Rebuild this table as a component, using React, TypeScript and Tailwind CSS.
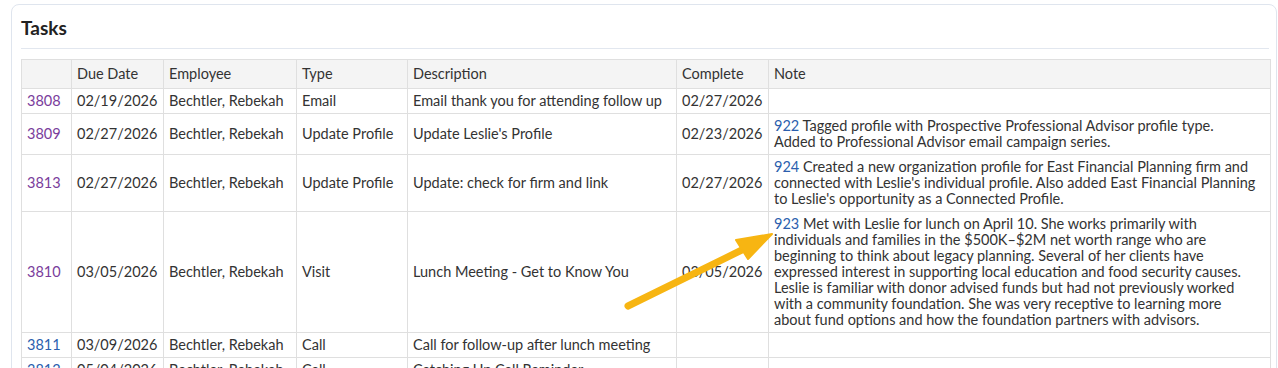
import React from "react";

type Row = {
  id: string;
  visited: boolean;
  due: string;
  emp: string;
  type: string;
  desc: string;
  complete: string;
  noteId?: string;
  note?: string[];
};

const rows: Row[] = [
  { id: "3808", visited: true, due: "02/19/2026", emp: "Bechtler, Rebekah", type: "Email", desc: "Email thank you for attending follow up", complete: "02/27/2026" },
  {
    id: "3809", visited: true, due: "02/27/2026", emp: "Bechtler, Rebekah", type: "Update Profile", desc: "Update Leslie's Profile", complete: "02/23/2026",
    noteId: "922",
    note: ["Tagged profile with Prospective Professional Advisor profile type.", "Added to Professional Advisor email campaign series."],
  },
  {
    id: "3813", visited: true, due: "02/27/2026", emp: "Bechtler, Rebekah", type: "Update Profile", desc: "Update: check for firm and link", complete: "02/27/2026",
    noteId: "924",
    note: [
      "Created a new organization profile for East Financial Planning firm and",
      "connected with Leslie's individual profile. Also added East Financial Planning",
      "to Leslie's opportunity as a Connected Profile.",
    ],
  },
  {
    id: "3810", visited: true, due: "03/05/2026", emp: "Bechtler, Rebekah", type: "Visit", desc: "Lunch Meeting - Get to Know You", complete: "03/05/2026",
    noteId: "923",
    note: [
      "Met with Leslie for lunch on April 10. She works primarily with",
      "individuals and families in the $500K–$2M net worth range who are",
      "beginning to think about legacy planning. Several of her clients have",
      "expressed interest in supporting local education and food security causes.",
      "Leslie is familiar with donor advised funds but had not previously worked",
      "with a community foundation. She was very receptive to learning more",
      "about fund options and how the foundation partners with advisors.",
    ],
  },
  { id: "3811", visited: false, due: "03/09/2026", emp: "Bechtler, Rebekah", type: "Call", desc: "Call for follow-up after lunch meeting", complete: "" },
  { id: "3812", visited: false, due: "05/04/2026", emp: "Bechtler, Rebekah", type: "Call", desc: "Catching Up Call Reminder", complete: "" },
];

const td = "border border-[#dfdfdf] px-[5px] py-[4px] align-middle";
const th = "border border-[#dfdfdf] px-[5px] py-[6px] text-left font-normal align-middle";

export default function App() {
  return (
    <div
      className="relative h-[368px] w-[1278px] overflow-hidden bg-white text-[14.5px] leading-[16px] text-[#333333]"
      style={{ fontFamily: "Lato, 'Liberation Sans', sans-serif" }}
    >
      <div className="ml-[11px] mt-[4px] w-[1266px] rounded-[8px] border border-[#dfe5ee] pl-[9px] pt-[12px] pb-4">
        <h2 className="mr-[7px] border-b border-[#e2e7ef] pb-[9px] text-[19px] leading-[22px] font-bold text-[#222222]">
          Tasks
        </h2>
        <table className="mt-[10px] w-[1249px] table-fixed border-collapse">
          <colgroup>
            <col className="w-[50px]" />
            <col className="w-[92px]" />
            <col className="w-[133px]" />
            <col className="w-[111px]" />
            <col className="w-[269px]" />
            <col className="w-[92px]" />
            <col className="w-[502px]" />
          </colgroup>
          <thead>
            <tr className="bg-[#f4f4f4]">
              <th className={th}></th>
              <th className={th}>Due Date</th>
              <th className={th}>Employee</th>
              <th className={th}>Type</th>
              <th className={th}>Description</th>
              <th className={th}>Complete</th>
              <th className={th}>Note</th>
            </tr>
          </thead>
          <tbody>
            {rows.map((r) => (
              <tr key={r.id}>
                <td className={td}>
                  <a className={r.visited ? "text-[#7a3d9c]" : "text-[#2b5fae]"}>{r.id}</a>
                </td>
                <td className={td}>{r.due}</td>
                <td className={td}>{r.emp}</td>
                <td className={td}>{r.type}</td>
                <td className={td}>{r.desc}</td>
                <td className={td}>{r.complete}</td>
                <td className={td}>
                  {r.note ? (
                    <div>
                      {r.note.map((line, i) => (
                        <div key={i} className="whitespace-nowrap">
                          {i === 0 ? <span className="text-[#2b5fae]">{r.noteId} </span> : null}
                          {line}
                        </div>
                      ))}
                    </div>
                  ) : (
                    <div className="h-[16px]"></div>
                  )}
                </td>
              </tr>
            ))}
          </tbody>
        </table>
      </div>
      <svg
        className="pointer-events-none absolute left-0 top-0"
        width="1278"
        height="368"
        viewBox="0 0 1278 368"
      >
        <line x1="628" y1="306" x2="748" y2="247" stroke="#f7b512" strokeWidth="7" strokeLinecap="round" />
        <polygon points="772,234 736,240 748,259" fill="#f7b512" stroke="#f7b512" strokeWidth="2" strokeLinejoin="round" />
      </svg>
    </div>
  );
}
